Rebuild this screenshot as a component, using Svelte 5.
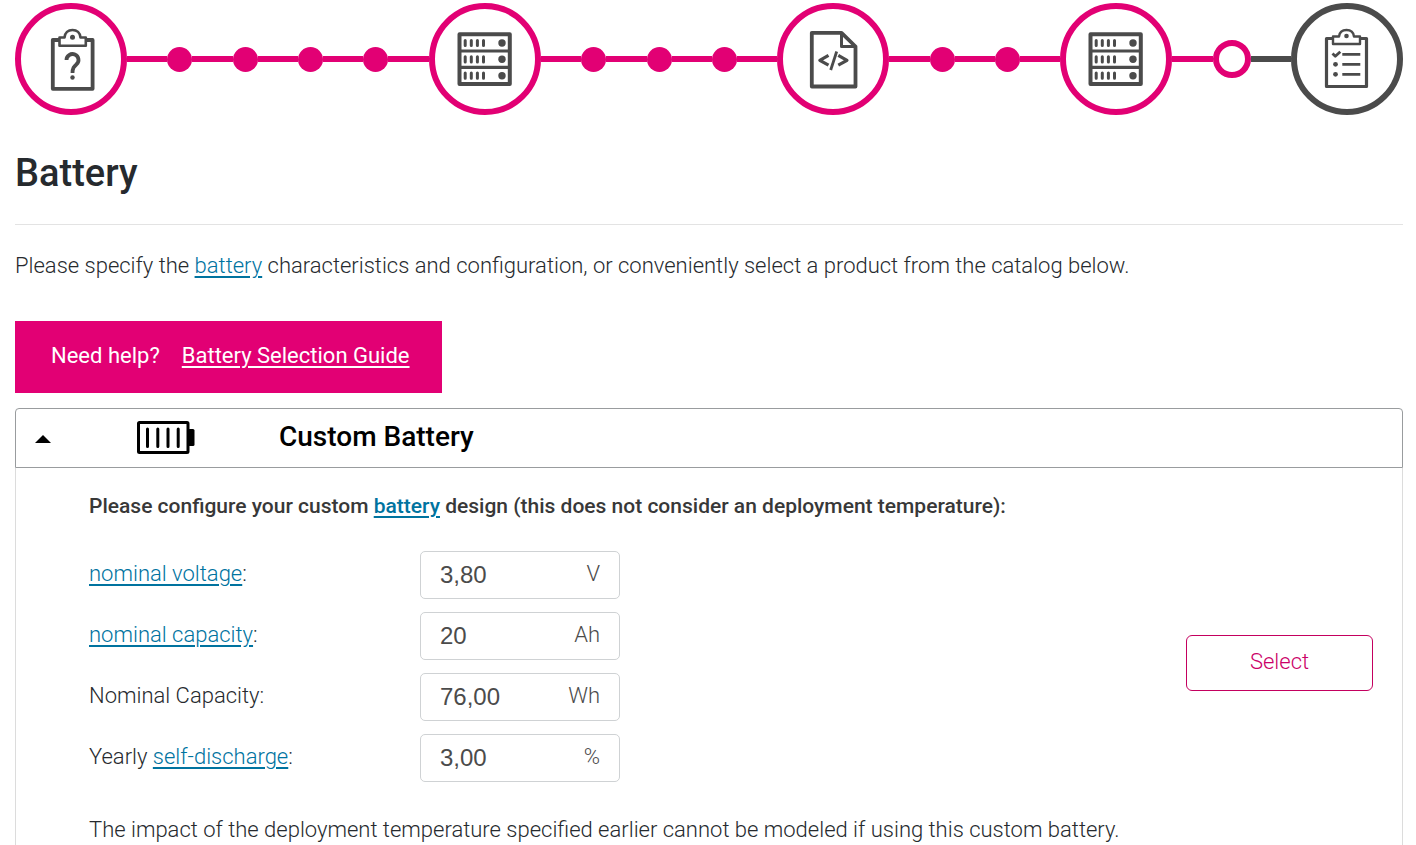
<script>
  const steps = [
    { icon: 'question', label: 'Questions', dots: 4 },
    { icon: 'server', label: 'Hardware', dots: 3 },
    { icon: 'code', label: 'Software', dots: 2 },
    { icon: 'server', label: 'Components', dots: 0 },
  ];

  let open = $state(true);
  let fields = $state([
    { id: 'voltage', before: '', link: 'nominal voltage', after: ':', value: '3,80', unit: 'V' },
    { id: 'capacity', before: '', link: 'nominal capacity', after: ':', value: '20', unit: 'Ah' },
    { id: 'energy', before: 'Nominal Capacity:', link: '', after: '', value: '76,00', unit: 'Wh' },
    { id: 'discharge', before: 'Yearly ', link: 'self-discharge', after: ':', value: '3,00', unit: '%' },
  ]);
</script>

{#snippet stepIcon(icon)}
  <svg class="step" class:pending={icon === 'checklist'} viewBox="0 0 112 112" aria-hidden="true">
    <circle class="ring" cx="56" cy="56" r="53" />
    {#if icon === 'question'}
      <g class="art" stroke-width="3.8">
        <path d="M44 37H37.800V85.800H77.600V37H71" />
        <path stroke-width="2.600" d="M44.500 42.700V34.500H49.500C50 30 53 27 57.500 27S65 30 65.500 34.500H70.800V42.700Z" />
        <path d="M51.500 57A6 5.800 0 1 1 61.500 61.200C59 63.600 57.500 65 57.500 70" />
        <circle class="fill" cx="57.500" cy="74.500" r="2.200" />
        <circle class="fill" cx="57.500" cy="34.200" r="2.500" />
      </g>
    {:else if icon === 'server'}
      <g class="art" stroke-width="4">
        <rect x="30.500" y="31.300" width="50.300" height="49.700" />
        <path stroke-width="3.200" d="M30 48H81M30 64.300H81" />
        {#each [40, 56.3, 72.7] as y}
          <path stroke-width="3" stroke-linecap="round" d="M36.200 {y - 2.6}v5.200M42.300 {y - 2.6}v5.200M48.400 {y - 2.6}v5.200M54.500 {y - 2.6}v5.200" />
          <circle class="fill" cx="73" cy={y} r="3.700" />
        {/each}
      </g>
    {:else if icon === 'code'}
      <g class="art" stroke-width="3.800">
        <path d="M34.800 29.800H64.500L78.500 43.500V83.500H34.800Z" />
        <path stroke-width="3" d="M64.500 30V43.500H78.500" />
        <path stroke-width="3.200" d="M51.500 52.400L42.800 57.300L51.500 62.200M61.300 52.400L70 57.300L61.300 62.200" />
        <path stroke-width="2.800" d="M59.700 48.500L53.700 67" />
      </g>
    {:else}
      <g class="art" stroke-width="3.200">
        <path d="M41.500 35.500H35.500V83.500H75.500V35.500H69.500" />
        <path stroke-width="2.400" d="M42 41V33.500H48C48.500 29.500 51 27 55.500 27S62.500 29.500 63 33.500H69V41Z" />
        <path stroke-width="2.800" d="M41.500 50.500L44.300 53.300L49.300 48.700M51.300 51.300H69.300M51.300 61.300H69.300M51.300 71.300H69.300" />
        <circle class="fill" cx="44.500" cy="61.300" r="2.400" />
        <circle class="fill" cx="44.500" cy="71.300" r="2.400" />
        <circle class="fill" cx="55.500" cy="33" r="2.300" />
      </g>
    {/if}
  </svg>
{/snippet}

<main>
  <nav class="progress" aria-label="Progress">
    {#each steps as step}
      {@render stepIcon(step.icon)}
      <span class="line"></span>
      {#each { length: step.dots } as _}
        <span class="dot"></span>
        <span class="line"></span>
      {/each}
    {/each}
    <span class="current"></span>
    <span class="line ahead"></span>
    {@render stepIcon('checklist')}
  </nav>

  <h1>Battery</h1>

  <p class="intro">
    Please specify the <a href="#battery">battery</a> characteristics and configuration, or conveniently select a product from the catalog below.
  </p>

  <aside class="help">
    <span>Need help?</span>
    <a href="#guide">Battery Selection Guide</a>
  </aside>

  <section class="panel">
    <button class="panel-head" type="button" aria-expanded={open} onclick={() => (open = !open)}>
      <svg class="arrow" class:closed={!open} viewBox="0 0 16 8" aria-hidden="true"><path d="M0 8L8 0L16 8Z" /></svg>
      <svg class="battery" viewBox="0 0 58 33" aria-hidden="true">
        <rect x="1.500" y="1.500" width="49.500" height="30" rx="1" fill="none" stroke="#000" stroke-width="3" />
        <path d="M10.500 8V25.500M20.800 8V25.500M31 8V25.500M41.200 8V25.500" stroke="#000" stroke-width="3" stroke-linecap="round" />
        <rect x="51" y="8" width="6.500" height="17" rx="1.500" />
      </svg>
      <span class="panel-title">Custom Battery</span>
    </button>

    {#if open}
      <div class="panel-body">
        <form class="config" onsubmit={(e) => e.preventDefault()}>
          <p class="lead">
            Please configure your custom <a href="#battery">battery</a> design (this does not consider an deployment temperature):
          </p>
          <div class="fields">
            {#each fields as field}
              <div class="row">
                <label for={field.id}>{field.before}{#if field.link}<a href="#{field.id}">{field.link}</a>{/if}{field.after}</label>
                <div class="box">
                  <input id={field.id} type="text" inputmode="decimal" bind:value={field.value} />
                  <span class="unit">{field.unit}</span>
                </div>
              </div>
            {/each}
          </div>
          <p class="note">
            The impact of the deployment temperature specified earlier cannot be modeled if using this custom battery.
          </p>
        </form>
        <button class="select" type="button">Select</button>
      </div>
    {/if}
  </section>
</main>

<style>
  :global(body) {
    margin: 0;
    background: #fff;
  }

  main {
    padding: 3px 13px 0 15px;
    color: #262a2e;
    font-family: Roboto, "Liberation Sans", sans-serif;
    font-size: 22px;
    font-weight: 300;
    line-height: 30px;
  }

  a {
    color: #00739f;
    text-underline-offset: 3px;
  }

  p,
  h1 {
    margin: 0;
  }

  .progress {
    display: flex;
    align-items: center;
  }

  .step {
    flex: none;
    width: 112px;
    height: 112px;
  }

  .ring {
    fill: none;
    stroke: #e20074;
    stroke-width: 6;
  }

  .pending .ring {
    stroke: #4b4b4b;
  }

  .art {
    fill: none;
    stroke: #4b4b4b;
    stroke-linejoin: round;
  }

  .fill {
    fill: #4b4b4b;
    stroke: none;
  }

  .line {
    flex: 1;
    height: 6px;
    background: #e20074;
  }

  .line.ahead {
    background: #4b4b4b;
  }

  .dot {
    width: 25px;
    height: 25px;
    border-radius: 50%;
    background: #e20074;
  }

  .current {
    box-sizing: border-box;
    width: 38px;
    height: 38px;
    border: 6px solid #e20074;
    border-radius: 50%;
  }

  h1 {
    padding: 34px 0 26px;
    border-bottom: 1px solid #e3e3e3;
    font-size: 38px;
    font-weight: 500;
    line-height: 49px;
  }

  .intro {
    padding: 26px 0 40px;
  }

  .help {
    display: flex;
    gap: 22px;
    box-sizing: border-box;
    width: fit-content;
    height: 72px;
    padding: 20px 32px 20px 36px;
    background: #e20074;
    color: #fff;
    font-weight: 400;
  }

  .help a {
    color: #fff;
  }

  .panel {
    margin-top: 15px;
  }

  .panel-head {
    display: flex;
    align-items: center;
    width: 100%;
    height: 60px;
    padding: 0 19px 2px;
    border: 1px solid #999c9e;
    border-radius: 4px 4px 0 0;
    background: #fff;
    color: #000;
    font: 500 28px/36px Roboto, "Liberation Sans", sans-serif;
  }

  .arrow {
    width: 16px;
    height: 8px;
    margin: 4px 86px 0 0;
  }

  .arrow.closed {
    transform: rotate(180deg);
  }

  .battery {
    width: 58px;
    height: 33px;
    margin-right: 84px;
  }

  .panel-body {
    display: flex;
    align-items: center;
    justify-content: space-between;
    padding: 0 29px 0 73px;
    border: solid #dcdcdc;
    border-width: 0 1px;
  }

  .config {
    padding: 23px 0 13px;
  }

  .lead {
    font-size: 21px;
    font-weight: 500;
    color: #383838;
  }

  .fields {
    display: grid;
    gap: 13px;
    margin: 30px 0 33px;
  }

  .row {
    display: grid;
    grid-template-columns: 331px 200px;
    align-items: center;
  }

  .row label {
    padding-bottom: 2px;
  }

  .box {
    display: flex;
    align-items: center;
    box-sizing: border-box;
    height: 48px;
    padding: 0 19px;
    border: 1px solid #cfd2d4;
    border-radius: 5px;
    color: #4b4b4b;
  }

  .box input {
    flex: 1;
    min-width: 0;
    padding: 0;
    border: 0;
    outline: 0;
    background: none;
    color: inherit;
    font: 24px/30px "Liberation Sans", Arial, sans-serif;
  }

  .unit {
    padding-bottom: 2px;
  }

  .select {
    flex: none;
    width: 187px;
    height: 56px;
    padding: 0 0 2px;
    border: 1px solid #c4005f;
    border-radius: 6px;
    background: #fff;
    color: #cb0068;
    font: inherit;
  }
</style>
